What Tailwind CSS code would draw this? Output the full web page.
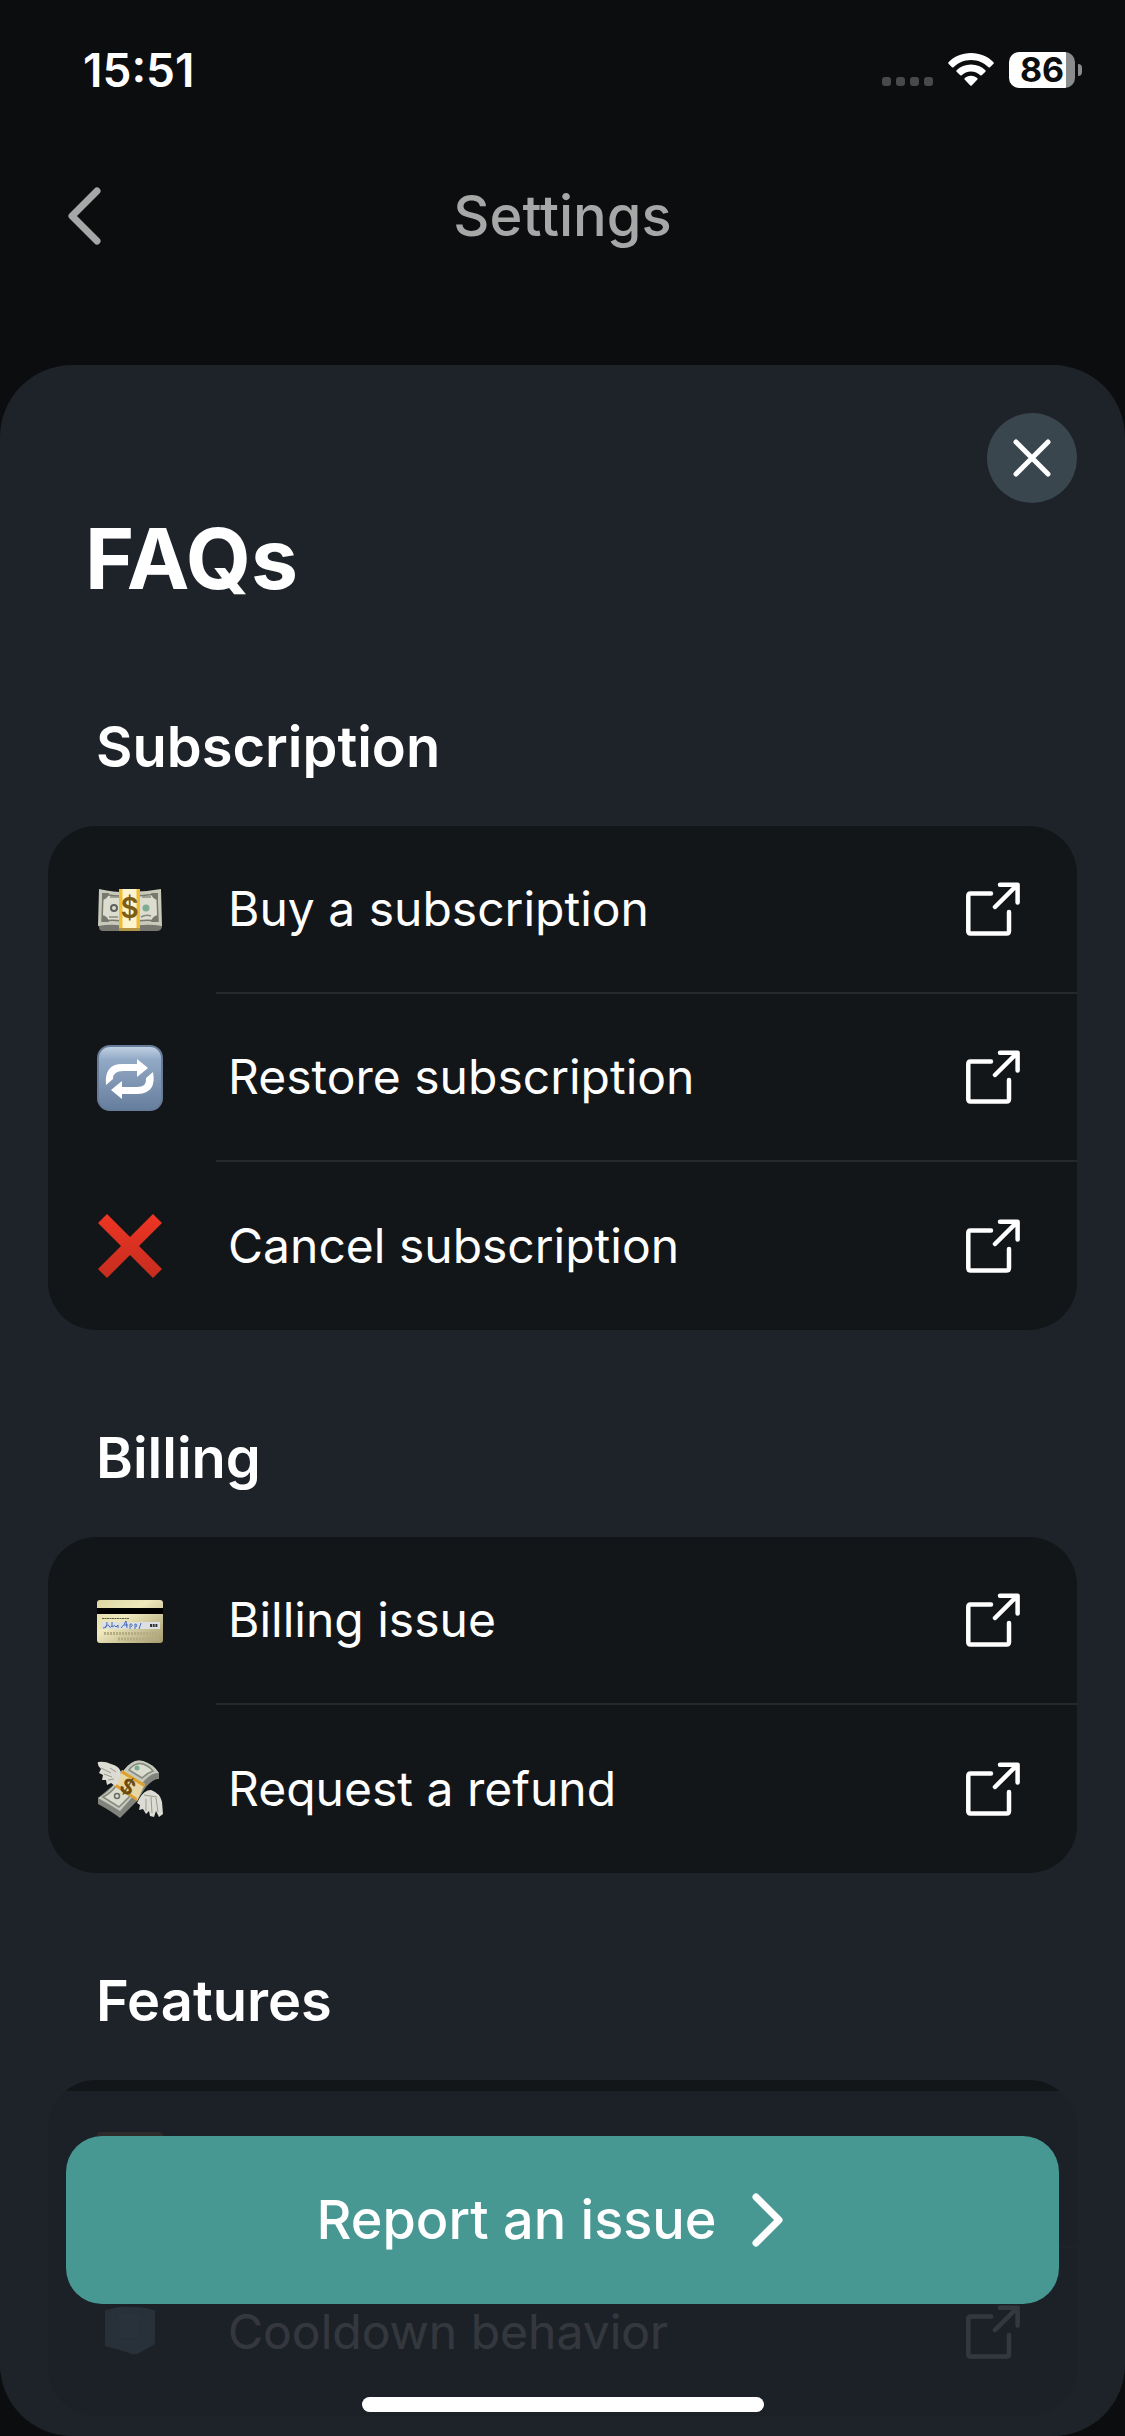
<!DOCTYPE html>
<html lang="en">
<head>
    <meta charset="UTF-8">
    <meta name="viewport" content="width=device-width, initial-scale=1.0">
    <title>FAQs</title>
    <script src="https://cdn.jsdelivr.net/npm/@tailwindcss/browser@4"></script>
</head>
<body class="h-screen flex flex-col overflow-hidden bg-[#0b0d0e] text-white font-['Inter','Liberation_Sans',sans-serif]">
    <!-- Shared icons -->
    <svg class="hidden">
        <symbol id="external" viewBox="0 0 54 54" fill="none" stroke="currentColor" stroke-width="4.500" stroke-linecap="round" stroke-linejoin="round">
            <path d="M25 11.500H4.500Q2.300 11.500 2.300 14V49Q2.300 51.500 4.500 51.500H40.500Q43 51.500 43 49V30" />
            <path d="M29 25 51 3M34 2.700H51.600V20.500" />
        </symbol>
    </svg>

    <!-- Status bar -->
    <div class="h-[140px] shrink-0 flex items-center justify-between pl-[83px] pr-[43px]">
        <p class="text-[46px] leading-none font-semibold">15:51</p>
        <div class="flex items-center">
            <svg class="w-[51px] h-[34px] mr-[15px]" viewBox="0 0 51 34" fill="#48494b">
                <rect x="0" y="24" width="9" height="9" rx="3" />
                <rect x="14" y="24" width="9" height="9" rx="3" />
                <rect x="28" y="24" width="9" height="9" rx="3" />
                <rect x="42" y="24" width="9" height="9" rx="3" />
            </svg>
            <svg class="w-[46px] h-[34px] mr-[15px]" viewBox="0 0 46 34" fill="#fff">
                <path d="M23 0C14 0 6 3.500.5 9.200Q-.2 10 .5 10.700L4 14.200Q4.700 14.800 5.500 14.200C10 9.800 16 7 23 7S36 9.800 40.500 14.200Q41.300 14.800 42 14.200L45.500 10.700Q46.200 10 45.500 9.200C40 3.500 32 0 23 0Z" />
                <path d="M23 11.500C17.300 11.500 12.300 13.700 8.600 17.300Q8 18 8.600 18.700L12.300 22.300Q13 22.900 13.700 22.300C16.200 20 19.300 18.500 23 18.500S29.800 20 32.300 22.300Q33 22.900 33.700 22.300L37.400 18.700Q38 18 37.400 17.300C33.700 13.700 28.700 11.500 23 11.500Z" />
                <path d="M23 22.700C20.300 22.700 18.200 23.600 16.600 25.200Q16 26 16.600 26.600L22.300 32.500Q23 33.100 23.700 32.500L29.400 26.600Q30 26 29.400 25.200C27.800 23.600 25.700 22.700 23 22.700Z" />
            </svg>
            <div class="w-[66px] h-9 rounded-[10px] bg-linear-to-r from-white from-[57px] to-[#8a8b8c] to-[57px] flex items-center justify-center text-[34px] leading-9 font-bold text-[#0b0d0e]">86</div>
            <div class="w-1 h-3 ml-[3px] rounded-r-full bg-[#8a8b8c]"></div>
        </div>
    </div>

    <!-- Settings header behind the sheet -->
    <header class="h-[152px] mb-[73px] shrink-0 grid grid-cols-[1fr_auto_1fr] items-center px-16 text-[#a6a7a7]">
        <button aria-label="Back" class="justify-self-start">
            <svg class="w-10 h-[60px]" viewBox="0 0 40 60" fill="none" stroke="currentColor" stroke-width="7" stroke-linecap="round" stroke-linejoin="round">
                <path d="M33 5 8 30 33 55" />
            </svg>
        </button>
        <h2 class="text-[56px] leading-none font-medium">Settings</h2>
    </header>

    <!-- FAQ sheet -->
    <main class="relative flex-1 min-h-0 overflow-hidden rounded-[72px] bg-[#1e2229] px-12 pt-12">
        <button aria-label="Close" class="ml-auto size-[90px] rounded-full bg-[#3a464e] flex items-center justify-center">
            <svg class="size-10" viewBox="0 0 40 40" fill="none" stroke="currentColor" stroke-width="5" stroke-linecap="round">
                <path d="M4 4 36 36M36 4 4 36" />
            </svg>
        </button>
        <h1 class="mt-2 pb-3 px-[37px] text-[84px] leading-[96px] font-bold">FAQs</h1>

        <section class="mt-24">
            <h2 class="mb-[47px] px-12 text-[56px] leading-[64px] font-semibold">Subscription</h2>
            <ul class="rounded-[48px] overflow-hidden bg-[#121619]">
                <li>
                    <a href="#buy" class="flex h-[168px]">
                        <span class="w-[168px] flex items-center pl-[49px]">
                            <svg class="size-[66px]" viewBox="0 0 66 66">
                                <path d="M1 47 2 50Q2 54 6 54H60Q64 54 65 50V47Z" fill="#77766f" />
                                <path d="M2 12Q22 16 33 15 48 15 64 12L65 49Q48 46 33 50 18 46 1 49Z" fill="#c9c9ba" />
                                <path d="M6 17Q22 20 33 19 46 19 60 17L61 44Q48 42 33 45 18 42 5 44Z" fill="#dcdccf" stroke="#77796f" stroke-width="1.500" />
                                <path d="M5 16h7q-1 6-7 7zM61 16h-7q1 6 7 7zM5 45h7q-1-6-7-7zM61 45h-7q1-6 7-7z" fill="#77796f" />
                                <path d="M13 20h9M45 20h9M12 40h9M44 40q5-3 10-1" stroke="#8a8b80" stroke-width="1.500" fill="none" />
                                <circle cx="17" cy="31" r="3" fill="none" stroke="#5e625b" stroke-width="2" />
                                <circle cx="49" cy="31" r="3.500" fill="#7eac93" />
                                <rect x="22" y="12" width="21" height="39" fill="#efbe35" />
                                <rect x="25.500" y="12" width="14" height="39" fill="#fdf4cf" />
                                <rect x="22" y="51" width="21" height="3" fill="#b39545" />
                                <text x="32.500" y="41" text-anchor="middle" font-size="28" font-weight="600" fill="#7c5c12">$</text>
                            </svg>
                        </span>
                        <span class="flex-1 flex items-center justify-between pl-3 pr-[57px] border-b-2 border-[#26292c]">
                            <span class="text-[48px] leading-none">Buy a subscription</span>
                            <svg class="size-[54px]"><use href="#external" /></svg>
                        </span>
                    </a>
                </li>
                <li>
                    <a href="#restore" class="flex h-[168px]">
                        <span class="w-[168px] flex items-center pl-[49px]">
                            <svg class="size-[66px]" viewBox="0 0 66 66">
                                <defs>
                                    <linearGradient id="tile" x2="0" y2="1">
                                        <stop offset="0" stop-color="#bfd0e2" />
                                        <stop offset=".2" stop-color="#93aac6" />
                                        <stop offset="1" stop-color="#677f9e" />
                                    </linearGradient>
                                </defs>
                                <rect width="66" height="66" rx="13" fill="#677c9a" />
                                <rect x="2" y="2" width="62" height="62" rx="11" fill="url(#tile)" />
                                <path d="M9 40Q7 19 25 19H40V14L51 23 40 32V26H26Q16 26 16 34Z" fill="#fff" />
                                <path d="M56 27Q60 48 41 49H25V54L14 45 25 36V42H40Q50 42 49 33Z" fill="#fff" />
                            </svg>
                        </span>
                        <span class="flex-1 flex items-center justify-between pl-3 pr-[57px] border-b-2 border-[#26292c]">
                            <span class="text-[48px] leading-none">Restore subscription</span>
                            <svg class="size-[54px]"><use href="#external" /></svg>
                        </span>
                    </a>
                </li>
                <li>
                    <a href="#cancel" class="flex h-[168px]">
                        <span class="w-[168px] flex items-center pl-[49px]">
                            <svg class="size-[66px]" viewBox="0 0 66 66">
                                <defs>
                                    <linearGradient id="cross" x2="0" y2="1">
                                        <stop offset="0" stop-color="#ee3524" />
                                        <stop offset="1" stop-color="#c52d1f" />
                                    </linearGradient>
                                </defs>
                                <path d="M10 1 33 24 56 1 65 10 42 33 65 56 56 65 33 42 10 65 1 56 24 33 1 10Z" fill="url(#cross)" />
                            </svg>
                        </span>
                        <span class="flex-1 flex items-center justify-between pl-3 pr-[57px]">
                            <span class="text-[48px] leading-none">Cancel subscription</span>
                            <svg class="size-[54px]"><use href="#external" /></svg>
                        </span>
                    </a>
                </li>
            </ul>
        </section>

        <section class="mt-24">
            <h2 class="mb-[47px] px-12 text-[56px] leading-[64px] font-semibold">Billing</h2>
            <ul class="rounded-[48px] overflow-hidden bg-[#121619]">
                <li>
                    <a href="#billing" class="flex h-[168px]">
                        <span class="w-[168px] flex items-center pl-[49px]">
                            <svg class="size-[66px]" viewBox="0 0 66 66">
                                <defs>
                                    <linearGradient id="card" x2="1" y2="1">
                                        <stop offset="0" stop-color="#ded5a0" />
                                        <stop offset=".4" stop-color="#efe9bd" />
                                        <stop offset="1" stop-color="#a39a6d" />
                                    </linearGradient>
                                </defs>
                                <rect y="12" width="66" height="43" rx="3" fill="url(#card)" />
                                <rect y="20" width="66" height="6" fill="#000" />
                                <path d="M5 30.500h27" stroke="#5b5843" stroke-width="1" stroke-dasharray="2 .5" />
                                <rect x="4" y="34" width="59" height="7" fill="#dde0e3" />
                                <path d="M6 40q4 0 4-6m-2 6q3-5 4-2t3 0v-4m0 5q3-3 4 0l2-2v3m3 0q4-4 5-7l1 7m-3-3h4m2 4v-5q4 0 1 3m4 2v-5q3 0 1 3m3 2 2-6" fill="none" stroke="#4468b8" stroke-width="1" />
                                <path d="M53 37.500h8" stroke="#333" stroke-width="3" stroke-dasharray="2 .7" />
                                <path d="M7 45.500h55M21 51h41" stroke="#b5ac86" stroke-width="3" stroke-dasharray="2 1" />
                            </svg>
                        </span>
                        <span class="flex-1 flex items-center justify-between pl-3 pr-[57px] border-b-2 border-[#26292c]">
                            <span class="text-[48px] leading-none">Billing issue</span>
                            <svg class="size-[54px]"><use href="#external" /></svg>
                        </span>
                    </a>
                </li>
                <li>
                    <a href="#refund" class="flex h-[168px]">
                        <span class="w-[168px] flex items-center pl-[49px]">
                            <svg class="size-[66px]" viewBox="0 0 66 66">
                                <path d="M27 14Q36 2 46 5 56 8 62 17V23Q57 22 49 31L40 45 23 62Q14 55 1 48V42L20 26Z" fill="#81847d" />
                                <path d="M27 14Q36 2 46 5 56 8 62 17 55 16 47 25L38 38 23 55Q12 48 1 42 11 37 19 26Z" fill="#c5c8bc" />
                                <path d="M32 14Q38 6 46 8 52 10 56 15 50 17 45 22ZM6 41Q14 37 19 30L33 40 22 51Z" fill="#dadccf" stroke="#858a7c" stroke-width="1.500" />
                                <circle cx="40" cy="12" r="2.500" fill="#7cac92" />
                                <circle cx="20" cy="40" r="2.500" fill="none" stroke="#666c62" stroke-width="1.500" />
                                <path d="M25 14 48 28 40 45 18 29Z" fill="#e7d7a5" />
                                <path d="M25 14 48 28 47 31 24 17ZM18 27 40 42V45L17 30Z" fill="#dba12c" />
                                <text x="31" y="38" text-anchor="middle" font-size="21" font-weight="700" fill="#6b4b10" transform="rotate(32 31 30)">$</text>
                                <path d="M1 6Q8 5 14 8 22 10 24 16L21 27 18 30 14 27 10 29 9 24 5 24 6 19 2 17 4 13Q0 10 1 6Z" fill="#dcdcd4" />
                                <path d="M4 12 14 17M7 18l8 3M11 24l6-1M13 12l6 4" stroke="#9b9a8c" stroke-width="1" />
                                <path d="M42 43Q47 34 54 34 63 37 65 46L66 58 62 61 59 55 57 61 53 60 52 55 49 58 46 53 42 54 43 49 40 47Z" fill="#dcdcd4" />
                                <path d="M49 43v12M54 41l1 16M59 42l2 14M47 39l13 2" stroke="#9b9a8c" stroke-width="1" />
                            </svg>
                        </span>
                        <span class="flex-1 flex items-center justify-between pl-3 pr-[57px]">
                            <span class="text-[48px] leading-none">Request a refund</span>
                            <svg class="size-[54px]"><use href="#external" /></svg>
                        </span>
                    </a>
                </li>
            </ul>
        </section>

        <section class="mt-24">
            <h2 class="mb-[47px] px-12 text-[56px] leading-[64px] font-semibold">Features</h2>
            <ul class="rounded-[48px] overflow-hidden bg-[#121619]">
                <li class="flex h-[168px]">
                    <span class="w-[168px] flex items-center pl-[49px]">
                        <svg class="size-[66px]" viewBox="0 0 66 66">
                            <rect y="1" width="66" height="65" rx="4" fill="#b9853b" />
                        </svg>
                    </span>
                    <span class="flex-1 border-b-2 border-[#26292c]"></span>
                </li>
                <li>
                    <a href="#cooldown" class="flex h-[168px]">
                        <span class="w-[168px] flex items-center pl-[49px]">
                            <svg class="size-[66px]" viewBox="0 0 66 66">
                                <path d="M8 12Q20 7 34 8 50 8 58 12V45L42 54Q36 57 30 53L8 47Z" fill="#85b4cc" />
                                <path d="M20 14h24l-2 26H22ZM8 12l12 3M8 46l14-7M58 44l-16-5M58 12l-14 3" fill="#8fbcd2" stroke="#7aa8c0" stroke-width="2" />
                            </svg>
                        </span>
                        <span class="flex-1 flex items-center justify-between pl-3 pr-[57px]">
                            <span class="text-[48px] leading-none">Cooldown behavior</span>
                            <svg class="size-[54px]"><use href="#external" /></svg>
                        </span>
                    </a>
                </li>
            </ul>
        </section>

        <!-- Translucent footer over the list -->
        <footer class="absolute inset-x-0 bottom-0 px-[66px] pt-[45px] pb-6 bg-[#1e2229]/90 flex flex-col items-center">
            <button class="w-full h-[168px] rounded-[36px] bg-[#479792] flex items-center justify-center gap-2 text-[54px] leading-none font-medium">
                Report an issue
                <svg class="size-[84px]" viewBox="0 0 84 84" fill="none" stroke="currentColor" stroke-width="7" stroke-linecap="round" stroke-linejoin="round">
                    <path d="M31 19 54 42 31 65" />
                </svg>
            </button>
            <div class="mt-[93px] w-[402px] h-[15px] rounded-full bg-white"></div>
        </footer>
    </main>
</body>
</html>
